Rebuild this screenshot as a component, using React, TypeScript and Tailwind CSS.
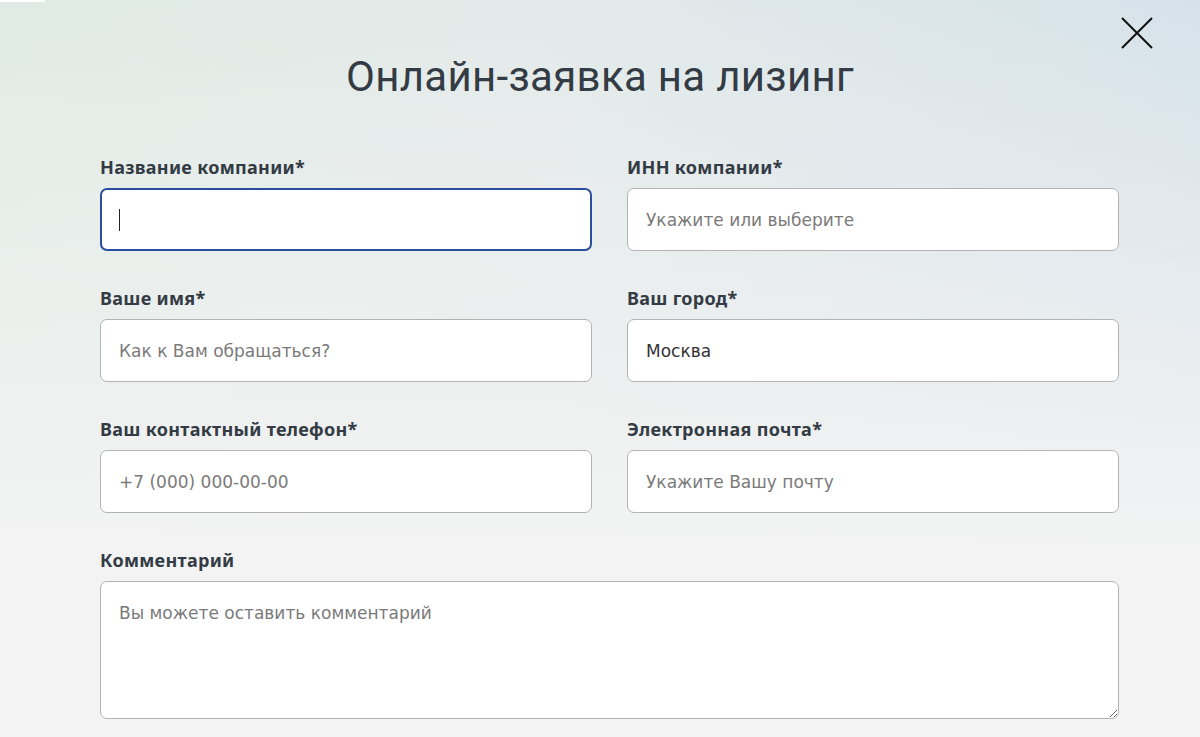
import React from "react";

const labelCls = "block text-[18px] leading-[18px] tracking-[0.3px] font-bold text-[#333b44] mb-[12px]";
const inputCls =
  "w-full h-[63px] rounded-[7px] bg-white border border-[#b3b3b3] px-[18px] text-[17px] text-[#333] placeholder:text-[#7a7a7a] outline-none";
const inputFont = { fontFamily: '"DejaVu Sans", sans-serif' };

function Field({ label, placeholder, value, focused }: { label: string; placeholder?: string; value?: string; focused?: boolean }) {
  return (
    <div className="flex flex-col">
      <label className={labelCls}>{label}</label>
      {focused ? (
        <div className="w-full h-[63px] rounded-[7px] bg-white border-2 border-[#2b4f9e] px-[17px] flex items-center">
          <span className="block w-px h-[22px] bg-[#222]" />
        </div>
      ) : (
        <input className={inputCls} style={inputFont} placeholder={placeholder} defaultValue={value} />
      )}
    </div>
  );
}

export default function App() {
  return (
    <div
      className="relative w-[1200px] h-[737px] overflow-hidden bg-[linear-gradient(180deg,rgba(255,255,255,0)_0%,#f3f3f3_75%),linear-gradient(90deg,#e0ebe5_0%,#e3eae9_45%,#d6e2ea_100%)]"
      style={{ fontFamily: '"Noto Sans", sans-serif' }}
    >
      <div className="absolute left-0 top-0 w-[45px] h-[2px] bg-white" />
      <button className="absolute left-[1121px] top-[17px] w-[32px] h-[32px]">
        <svg width="32" height="32" viewBox="0 0 32 32" fill="none" stroke="#111" strokeWidth="2">
          <path d="M1 1L31 31M31 1L1 31" />
        </svg>
      </button>
      <div className="pt-[52px] px-[100px]">
        <h1
          className="text-center text-[42px] leading-[50px] tracking-[0.3px] text-[#333b44] font-normal"
          style={{ fontFamily: 'Roboto, "Noto Sans", sans-serif' }}
        >
          Онлайн-заявка на лизинг
        </h1>
        <div className="mt-[56px] grid grid-cols-2 gap-x-[35px] gap-y-[38px] w-[1019px]">
          <Field label="Название компании*" focused />
          <Field label="ИНН компании*" placeholder="Укажите или выберите" />
          <Field label="Ваше имя*" placeholder="Как к Вам обращаться?" />
          <Field label="Ваш город*" value="Москва" />
          <Field label="Ваш контактный телефон*" placeholder="+7 (000) 000-00-00" />
          <Field label="Электронная почта*" placeholder="Укажите Вашу почту" />
          <div className="col-span-2 flex flex-col">
            <label className={labelCls}>Комментарий</label>
            <textarea
              className="w-full h-[138px] rounded-[7px] bg-white border border-[#b3b3b3] px-[18px] py-[18px] text-[17px] leading-[26px] text-[#333] placeholder:text-[#7a7a7a] outline-none"
              style={inputFont}
              placeholder="Вы можете оставить комментарий"
            />
          </div>
        </div>
      </div>
    </div>
  );
}
